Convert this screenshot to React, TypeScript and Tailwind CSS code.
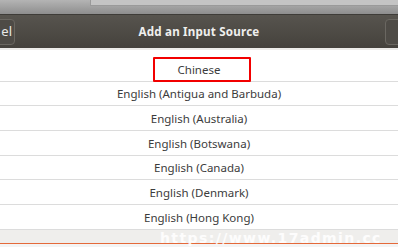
import React from "react";

const rows = [
  "English (Antigua and Barbuda)",
  "English (Australia)",
  "English (Botswana)",
  "English (Canada)",
  "English (Denmark)",
  "English (Hong Kong)",
];

export default function App() {
  return (
    <div
      className="relative w-[398px] h-[247px] overflow-hidden flex flex-col bg-white"
      style={{ fontFamily: '"Noto Sans", "DejaVu Sans", sans-serif' }}
    >
      {/* top strip of the window behind */}
      <div className="h-[14px] bg-gradient-to-b from-[#b4b4b4] to-[#8e8e8e] flex">
        <div className="ml-[90px] flex-1 h-[6px] bg-[#c4c4c4] border-l border-b border-[#9a9a9a]" />
      </div>
      {/* header bar */}
      <div className="h-[34px] bg-gradient-to-b from-[#57544e] to-[#45423d] border-t border-[#3e3c38] grid grid-cols-[1fr_auto_1fr] items-center">
        <div className="flex">
          <div className="-ml-[22px] w-[37px] h-[26px] rounded-[4px] border border-[#6a6761] bg-[#4e4b46] flex items-center justify-end pr-[2px] text-[13px] text-[#e8e8e6]">
            el
          </div>
        </div>
        <div className="text-[11.6px] font-bold text-[#efefed] tracking-[0.2px]">Add an Input Source</div>
        <div className="flex justify-end">
          <div className="-mr-[20px] w-[33px] h-[26px] rounded-[4px] border border-[#6a6761] bg-[#4e4b46]" />
        </div>
      </div>
      {/* separator band */}
      <div className="h-[2px] bg-[#edecea]" />
      {/* list */}
      <div className="flex flex-col text-[11.5px] text-[#3c3c3c]">
        <div className="h-[7px] bg-white" />
        <div className="relative h-[24.7px] border-b border-[#dcdcdc] flex items-center justify-center pt-[1px]">
          <span>Chinese</span>
          <div className="absolute left-[153px] top-0 w-[98px] h-[25px] border-2 border-[#f20000] rounded-[1px]" />
        </div>
        {rows.map((r) => (
          <div key={r} className="h-[24.7px] border-b border-[#dcdcdc] flex items-center justify-center pt-[1px]">
            {r}
          </div>
        ))}
      </div>
      <div className="h-[13px] bg-[#efeeec]" />
      <div className="h-[1px] bg-[#e4693a]" />
      <div className="flex-1 bg-[#f4f4f4]" />
      {/* watermark */}
      <div
        className="absolute left-[160px] top-[231px] text-[14px] font-bold text-white/85 tracking-[1.4px] leading-none"
        style={{ fontFamily: '"DejaVu Sans", sans-serif' }}
      >
        https://www.17admin.cc
      </div>
    </div>
  );
}
